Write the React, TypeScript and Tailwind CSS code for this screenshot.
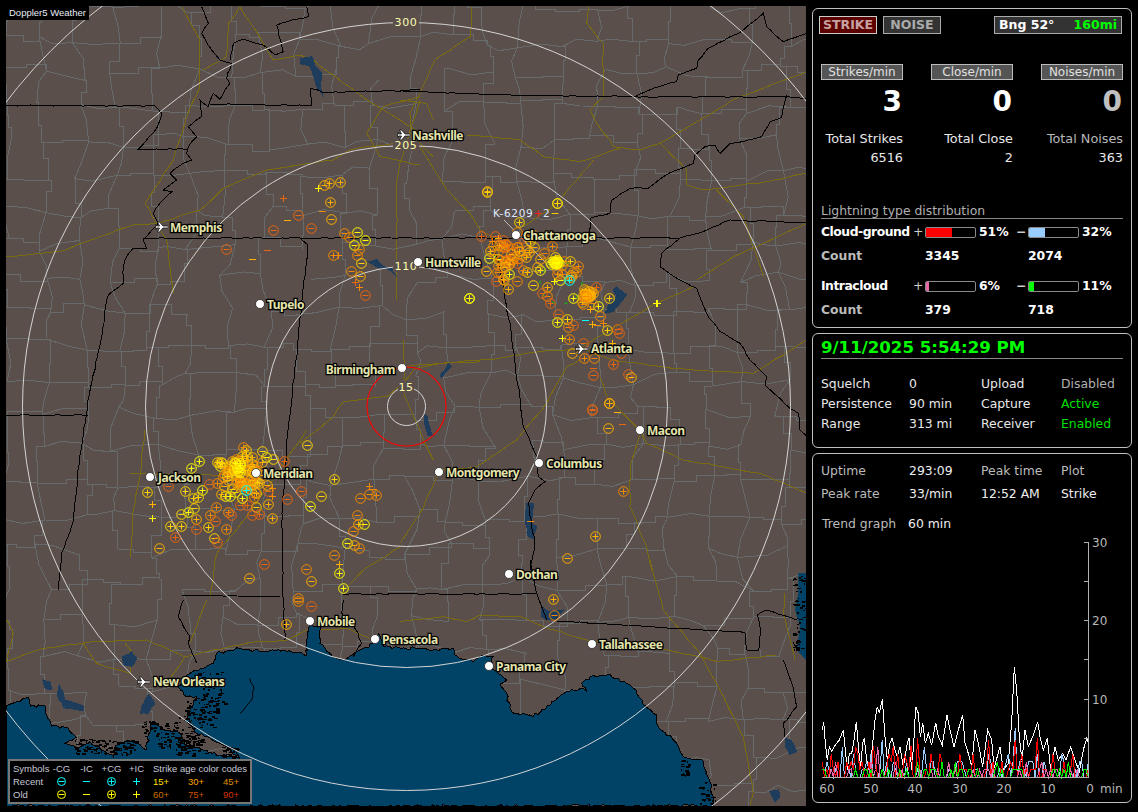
import React from 'react'

type Pt = [number, number]

function seeded(seed: number) {
  let s = seed
  return () => {
    s = (s + 0x6d2b79f5) | 0
    let t = Math.imul(s ^ (s >>> 15), 1 | s)
    t = (t + Math.imul(t ^ (t >>> 7), 61 | t)) ^ t
    return ((t ^ (t >>> 14)) >>> 0) / 4294967296
  }
}

// points below are read off 3x crops, so they carry the crop's origin
const Z = (ox: number, oy: number, pts: number[][]): Pt[] => pts.map((p) => [ox + p[0] / 3, oy + p[1] / 3])
const toD = (pts: Pt[]) => pts.map((p, i) => (i ? 'L' : 'M') + p[0].toFixed(1) + ' ' + p[1].toFixed(1)).join(' ')

function jag(pts: Pt[], amp: number, step: number, seed: number): Pt[] {
  const r = seeded(seed)
  const out: Pt[] = []
  for (let i = 0; i < pts.length - 1; i++) {
    const [x1, y1] = pts[i]
    const [x2, y2] = pts[i + 1]
    const n = Math.max(1, Math.round(Math.hypot(x2 - x1, y2 - y1) / step))
    for (let k = 0; k < n; k++) {
      const f = k / n
      const a = k === 0 ? 0 : amp
      out.push([x1 + (x2 - x1) * f + (r() - 0.5) * a, y1 + (y2 - y1) * f + (r() - 0.5) * a])
    }
  }
  out.push(pts[pts.length - 1])
  return out
}

const gulf: Pt[] = [
  ...Z(0, 600, [[18,318],[50,305],[85,293],[92,318],[135,318],[140,345],[155,378],[205,385],[228,412],[195,430],[235,445],[270,425],[310,452],[340,470],[345,440],[375,425],[415,430],[440,450],[450,375],[470,375],[500,392],[540,400],[560,440],[610,450],[660,465],[720,475],[680,440],[620,410],[590,400],[555,360],[570,330],[590,290],[560,290],[535,260],[570,220],[610,205],[640,190],[650,160],[720,145],[780,155],[850,150],[920,165],[920,130],[930,75],[960,75],[960,130],[1000,172],[1035,178],[1080,150],[1120,130],[1135,100],[1150,140],[1230,148]]),
  ...Z(400, 560, [[30,262],[100,270],[160,265],[165,285],[220,305],[240,290],[280,290],[270,320],[320,360],[300,372],[320,400],[335,455],[400,470],[500,395],[540,385],[560,395],[545,370],[570,350],[630,342],[700,385],[735,437],[770,465],[775,500],[830,550],[850,590],[905,600],[930,665],[942,738]]),
  [6, 806],
]

const lakes: Pt[][] = [
  Z(0, 0, [[900,175],[935,170],[945,200],[965,220],[960,260],[970,290],[950,260],[930,200],[900,190]]),
  Z(0, 0, [[1105,785],[1130,778],[1150,800],[1175,805],[1190,830],[1165,808],[1130,800]]),
  Z(460, 190, [[460,300],[470,290],[480,300],[500,315],[480,340],[460,365],[435,370],[445,345],[470,320]]),
  Z(300, 340, [[420,110],[445,70],[455,80],[435,100],[425,112]]),
  Z(300, 340, [[372,225],[382,228],[390,265],[397,285],[385,285],[375,255]]),
  Z(400, 280, [[380,670],[400,670],[395,730],[410,740],[400,775],[385,770],[375,720]]),
  Z(0, 600, [[368,170],[395,155],[410,175],[395,200],[370,195]]),
  Z(0, 600, [[128,240],[150,245],[155,268],[135,265]]),
  Z(0, 600, [[178,255],[195,300],[250,318],[252,332],[190,322],[172,285]]),
  Z(0, 600, [[425,320],[445,285],[465,310],[445,340],[422,340]]),
  Z(400, 560, [[1155,530],[1180,550],[1190,575],[1170,585],[1155,560]]),
  Z(400, 560, [[1110,695],[1135,690],[1140,710],[1125,725]]),
  Z(400, 560, [[425,140],[445,155],[490,150],[470,180],[440,180],[425,170]]),
]

const atlantic: Pt[] = Z(400, 560, [[1195,40],[1218,40],[1218,300],[1190,270],[1200,200],[1185,150],[1195,100]])

const borders: Pt[][] = [
  Z(0, 0, [[18,316],[465,318],[485,340],[470,385],[415,448],[560,448]]),
  Z(0, 0, [[605,20],[625,70],[605,100],[635,150],[660,180],[695,190],[680,235],[690,250],[675,270],[660,298],[640,280],[625,320],[600,300],[605,350],[565,380],[590,410],[565,440],[560,460],[575,480],[550,490],[510,520],[530,540],[490,570],[515,575],[480,610],[460,640],[475,670],[430,720],[440,745],[400,745],[380,770],[370,800],[370,850],[325,885],[320,900]]),
  [[107,300],[100,345],[88,400],[78,470],[74,520],[62,552],[58,590]],
  [[6,415],[88,415]],
  [[182,595],[280,597]],
  [[343,594],[537,594]],
  Z(0, 600, [[550,0],[535,50],[570,110],[565,130],[590,190]]),
  [[308,245],[302,300],[296,360],[288,430],[282,513],[283,597],[285,640]],
  Z(0, 0, [[430,715],[900,713],[925,735]]),
  [[300,238],[680,238],[707,230],[730,220],[806,223]],
  Z(400, 280, [[305,0],[330,130],[370,440],[410,530],[415,590],[435,605],[405,630],[385,670],[405,790],[390,870]]),
  [[493,238],[502,280]],
  Z(400, 560, [[390,0],[410,100],[425,140],[440,180]]),
  Z(400, 560, [[470,183],[950,212],[1035,218],[1040,270],[1075,272],[1082,215],[1072,165],[1100,150],[1190,180]]),
  Z(0, 600, [[1030,0],[1025,40],[1060,70],[1085,130],[1060,170]]),
  Z(400, 280, [[840,0],[890,25],[920,100],[960,155],[1020,190],[1050,240],[1100,290],[1095,315],[1140,355],[1170,385],[1195,400],[1200,450],[1230,480]]),
  Z(400, 0, [[840,715],[785,760],[780,800],[840,840]]),
  Z(0, 0, [[630,312],[795,315],[935,316],[930,265],[970,278],[1260,270]]),
  Z(400, 0, [[0,272],[300,285],[700,290],[1160,290],[1220,295]]),
  Z(400, 0, [[705,290],[760,265],[830,245],[835,225],[890,205],[895,180],[925,145],[1030,90],[1090,40],[1100,80],[1150,125],[1220,100]]),
  Z(400, 0, [[1160,285],[1145,350],[1140,355],[1110,365],[1085,410],[1045,420],[990,430],[960,460],[945,435],[915,440],[885,465],[880,490],[830,510],[790,530],[745,565],[690,565],[635,600],[630,640],[570,655],[570,715]]),
  Z(0, 0, [[690,180],[700,130],[730,118],[790,135],[825,165],[850,155],[830,75],[860,65],[925,50],[920,20]]),
  Z(400, 560, [[1150,300],[1175,370],[1190,440],[1150,490],[1155,530]]),
]

const roads: Pt[][] = [
  Z(0, 0, [[18,770],[180,755],[300,710],[400,675],[470,670],[600,630],[670,565],[800,510],[1000,480],[1050,450],[1100,440],[1200,430]]),
  Z(0, 0, [[545,20],[600,120],[600,260],[560,350],[520,480],[435,610],[470,670],[500,720],[510,800],[520,880]]),
  Z(0, 0, [[720,20],[685,70],[680,170],[610,210]]),
  Z(0, 0, [[720,20],[790,130],[820,180],[900,165],[940,180],[1100,300],[1200,360],[1260,400]]),
  Z(0, 0, [[1100,400],[1150,320],[1260,290]]),
  Z(0, 0, [[1100,400],[1140,470],[1260,495]]),
  Z(0, 0, [[1190,900],[1190,550],[1200,490],[1260,300]]),
  Z(400, 0, [[215,20],[210,110],[105,180],[60,280],[30,340],[30,400],[100,470]]),
  Z(400, 0, [[565,20],[560,70],[610,130],[610,290],[570,330],[590,370],[630,420],[640,440],[720,450],[780,430],[1020,290],[1220,215]]),
  Z(400, 0, [[200,405],[360,420],[430,470],[540,485],[660,445]]),
  Z(400, 0, [[780,430],[860,510],[860,555],[910,570],[1100,545],[1220,520]]),
  Z(400, 0, [[950,570],[1030,650],[1090,830]]),
  Z(400, 0, [[0,300],[80,310],[100,360]]),
  Z(400, 0, [[60,440],[140,570],[210,640],[240,690],[290,720]]),
  Z(400, 0, [[580,480],[460,620],[370,680]]),
  Z(400, 0, [[890,840],[1000,770],[1220,670]]),
  Z(400, 280, [[0,260],[120,250],[300,235],[420,215],[540,205]]),
  Z(400, 280, [[540,205],[640,240],[820,265],[1060,280],[1220,180]]),
  Z(400, 280, [[540,205],[750,80],[880,20]]),
  Z(400, 280, [[540,240],[500,260],[460,330],[440,370],[350,480],[230,560],[120,570]]),
  Z(400, 280, [[120,570],[60,700],[0,790]]),
  Z(400, 280, [[600,290],[620,350],[720,450],[740,490],[850,540],[1080,580],[1220,640]]),
  Z(400, 280, [[720,460],[690,560],[690,680],[740,800],[755,870]]),
  Z(300, 340, [[0,310],[100,230],[130,185],[260,170],[310,130],[345,85],[430,70],[540,65]]),
  Z(300, 340, [[310,0],[315,170],[345,240],[400,360]]),
  Z(400, 560, [[0,185],[130,170],[200,185],[240,165],[360,170],[430,200],[560,240],[800,270],[900,290],[950,305],[1130,285]]),
  Z(400, 560, [[750,0],[790,150],[900,280],[960,390],[1030,530],[1060,700],[1050,735]]),
  Z(400, 560, [[1155,100],[1150,160],[1185,300]]),
  Z(0, 600, [[18,185],[130,145],[280,125],[440,120],[555,170],[640,150],[770,125],[860,120],[920,90],[1040,85],[1110,115]]),
  Z(0, 600, [[570,130],[620,0]]),
  Z(0, 600, [[20,60],[40,100],[18,185]]),
  Z(0, 600, [[250,130],[290,190],[390,220],[400,160],[375,130]]),
  Z(0, 600, [[510,235],[555,170]]),
  Z(130, 430, [[530,0],[350,260],[260,370],[240,500]]),
  Z(130, 430, [[45,0],[30,140],[10,240],[0,380]]),
  Z(130, 430, [[0,130],[270,135],[300,100]]),
  Z(130, 430, [[810,350],[700,420],[640,480]]),
]

function countyPaths() {
  const r = seeded(42)
  const cols = 23
  const rows = 25
  const grid: Pt[][] = []
  for (let j = 0; j < rows; j++) {
    const row: Pt[] = []
    for (let i = 0; i < cols; i++) {
      row.push([6 + i * 37 + (r() - 0.5) * 18, 6 + j * 34 + (r() - 0.5) * 16])
    }
    grid.push(row)
  }
  const d: string[] = []
  const edge = (a: Pt, b: Pt) => {
    if (r() < 0.14) return
    const mx = (a[0] + b[0]) / 2 + (r() - 0.5) * 10
    const my = (a[1] + b[1]) / 2 + (r() - 0.5) * 10
    const m: Pt = [mx, my]
    d.push(toD(r() < 0.5 ? [a, [mx, a[1]], m, [b[0], my], b] : [a, m, b]))
  }
  for (let j = 0; j < rows; j++) {
    for (let i = 0; i < cols; i++) {
      if (i < cols - 1) edge(grid[j][i], grid[j][i + 1])
      if (j < rows - 1) edge(grid[j][i], grid[j + 1][i])
    }
  }
  return d.join(' ')
}

function marsh() {
  const r = seeded(7)
  const spots: [number, number, number, number][] = [
    [212, 692, 14, 20], [200, 712, 16, 16], [186, 728, 13, 16], [168, 735, 10, 12], [190, 745, 16, 10], [150, 728, 8, 8], [122, 747, 18, 7], [88, 746, 14, 7],
    [799, 590, 6, 14], [801, 615, 5, 16], [797, 640, 5, 10], [707, 792, 8, 12], [684, 768, 4, 8], [230, 752, 8, 6],
  ]
  const d: string[] = []
  for (const [x, y, sx, sy] of spots) {
    for (let i = 0; i < sx * 4; i++) {
      const px = Math.round(x + (r() - 0.5) * 2 * sx)
      const py = Math.round(y + (r() - 0.5) * 2 * sy)
      const w = 1 + Math.floor(r() * 4)
      d.push(`M${px} ${py}h${w}v${r() < 0.5 ? 1 : 2}h-${w}z`)
    }
  }
  return d.join(' ')
}

const C = ['#ffff00', '#ffd400', '#ffb000', '#f58a00', '#e8660f', '#00ffff']
const [Y, A, B, O, D, K] = [0, 1, 2, 3, 4, 5]
type S = [number, number, string, number]

const z5: S[] = [[207,92,'p',Y],[183,115,'p',Y],[270,108,'p',Y],[50,187,'p',A],[115,167,'m',D],[165,184,'p',A],[217,180,'p',Y],[237,162,'m',D],[190,205,'p',A],[205,202,'p',A],[65,223,'+',B],[67,263,'+',Y],[120,287,'p',A],[153,287,'p',A],[153,253,'m',A],[175,247,'p',Y],[193,233,'m',A],[197,268,'p',B],[199,297,'m',D],[235,290,'p',A],[258,230,'p',O],[240,256,'p',O],[256,274,'m',D],[289,297,'p',O],[253,325,'m',A],[260,336,'m',D],[136,320,'p',D],[88,355,'m',B],[425,263,'p',B],[413,223,'p',B],[377,230,'m',A],[387,252,'p',D],[365,256,'m',D],[352,225,'p',D],[330,225,'m',D],[293,245,'p',O],[303,255,'m',D],[285,197,'p',Y],[300,197,'p',Y],[337,203,'p',Y],[377,190,'p',A],[415,183,'m',D],[425,173,'+',O],[425,198,'+',O],[410,165,'m',B],[461,92,'p',D],[430,88,'m',A],[408,80,'m',Y],[397,63,'m',A],[365,82,'p',B],[337,78,'p',A],[530,46,'m',A],[613,146,'p',A],[574,199,'m',A],[512,184,'m',D],[472,208,'m',D],[541,229,'m',Y],[691,205,'m',O],[718,192,'m',O],[737,195,'p',O],[718,167,'+',O],[728,178,'-',O],[680,256,'m',O],[684,283,'p',B],[703,283,'m',Y],[668,304,'m',O],[652,340,'m',Y],[673,345,'m',B],[686,354,'m',O],[613,376,'m',O],[626,401,'+',B],[628,430,'p',Y],[640,475,'p',Y],[529,418,'m',O],[544,454,'m',B],[403,403,'m',D],[358,445,'m',B],[505,505,'m',O]]
const z6: S[] = [[82,5,'p',A],[291,40,'p',A],[178,97,'p',A],[64,138,'p',D],[95,153,'+',O],[113,145,'+',B],[88,205,'m',Y],[115,208,'m',Y],[77,243,'m',B],[110,245,'m',O],[107,272,'m',D],[133,270,'p',O],[148,252,'p',Y],[170,273,'m',O],[145,296,'p',B],[28,325,'p',Y],[202,245,'p',A],[240,240,'p',Y],[220,285,'m',A],[260,292,'p',B],[260,318,'m',O],[245,310,'m',D],[270,340,'p',D],[281,272,'+',Y],[300,270,'m',Y],[338,323,'p',Y],[331,213,'p',A],[408,292,'p',D],[448,325,'p',A],[413,348,'p',Y],[390,358,'+',B],[421,377,'m',O],[375,390,'-',K],[397,403,'+',B],[410,405,'-',O],[428,398,'+',O],[442,421,'p',A],[470,418,'m',D],[476,428,'m',D],[295,372,'m',D],[290,397,'p',Y],[321,388,'p',A],[325,412,'m',O],[340,405,'m',D],[305,445,'+',Y],[328,448,'p',O],[368,460,'m',D],[337,490,'m',B],[373,505,'p',O],[403,505,'m',O],[460,522,'p',D],[398,555,'m',D],[400,535,'-',D],[503,552,'m',D],[512,560,'m',B],[448,640,'p',B],[397,658,'m',D],[590,340,'+',Y],[455,460,'+',B],[483,490,'m',D]]
const z7: S[] = [[955,565,'+',Y],[973,555,'m',B],[988,549,'p',B],[1021,547,'p',B],[850,595,'+',D],[991,607,'p',B],[967,633,'-',O],[895,646,'m',D],[862,661,'-',B],[994,658,'m',B],[820,691,'m',D],[934,685,'m',D],[1033,700,'m',O],[1072,697,'m',Y],[1048,710,'m',O],[1096,721,'m',Y],[1063,736,'m',Y],[1078,748,'m',O],[679,748,'m',D],[802,751,'-',D],[757,778,'-',B],[1000,766,'p',O],[1015,766,'+',O],[1072,766,'m',O],[1084,790,'m',A],[1053,814,'m',O],[1081,829,'m',B],[1065,845,'+',D],[1078,862,'+',O],[1096,886,'m',D]]
const z11: S[] = [[261,574,'p',B],[472,610,'p',Y]]
const z12: S[] = [[207,55,'p',Y],[769,70,'+',Y],[577,390,'m',D],[628,370,'p',B],[650,397,'-',B],[625,445,'m',B],[667,432,'-',D],[670,633,'p',O],[390,723,'-',O],[586,768,'p',B],[502,835,'m',B]]
const z9: S[] = [[858,72,'p',B],[895,3,'m',O],[934,18,'m',D]]
const z10: S[] = [[460,118,'p',B],[463,165,'m',O]]

type Strike = { x: number; y: number; t: string; c: string }

function buildStrikes(): Strike[] {
  const out: Strike[] = []
  const add = (ox: number, oy: number, l: S[]) => l.forEach((s) => out.push({ x: ox + s[0] / 3, y: oy + s[1] / 3, t: s[2], c: C[s[3]] }))
  add(0, 0, z7)
  add(400, 0, z11)
  add(400, 280, z12)
  add(0, 600, z9)
  add(400, 560, z10)
  add(130, 430, z5)
  add(460, 190, z6)
  const r = seeded(11)
  const g = () => (r() + r() + r() - 1.5) / 0.5
  const cluster = (x: number, y: number, sx: number, sy: number, n: number, cols: number[]) => {
    for (let i = 0; i < n; i++) {
      out.push({
        x: x + g() * sx,
        y: y + g() * sy,
        t: r() < 0.5 ? 'p' : 'm',
        c: C[cols[Math.floor(r() * cols.length)]],
      })
    }
  }
  cluster(243, 476, 11, 12, 75, [B, B, O, O, A])
  cluster(236, 468, 5, 5, 10, [A, Y])
  cluster(508, 258, 9, 8, 26, [O, O, D, B])
  cluster(498, 244, 9, 5, 10, [O, B, D])
  cluster(540, 248, 11, 9, 12, [O, B, A])
  cluster(568, 272, 7, 7, 10, [O, B])
  cluster(587, 296, 3, 3, 22, [O, B, B])
  cluster(555, 262, 2, 2, 14, [Y, Y, A])
  return out
}

const strikes = buildStrikes()
const cyanStrikes: Pt[] = [[245.7, 490.3], [569, 280]]

function StrikeMark({ x, y, t, c }: Strike) {
  const px = Math.round(x) + 0.5
  const py = Math.round(y) + 0.5
  return (
    <g stroke={c} fill="none" strokeWidth={1}>
      {(t === 'p' || t === 'm') && <circle cx={px} cy={py} r={4.8} />}
      {t === 'p' && <path d={`M${px - 3} ${py}h6M${px} ${py - 3}v6`} />}
      {t === 'm' && <path d={`M${px - 3} ${py}h6`} />}
      {t === '+' && <path d={`M${px - 3.5} ${py}h7M${px} ${py - 3.5}v7`} />}
      {t === '-' && <path d={`M${px - 3.5} ${py}h7`} />}
    </g>
  )
}

const dots: [number, number][] = [[516, 235], [418, 262], [260, 304], [402, 368], [640, 430], [539, 463], [439, 472], [256, 473], [150, 477], [509, 574], [310, 621], [375, 639], [489, 666], [592, 644]]
const planes: [number, number][] = [[405, 135], [163, 227], [583, 349], [145, 682]]
const labels: [string, number, number, ('start' | 'end')?][] = [
  ['Nashville', 412, 140], ['Memphis', 170, 232], ['Chattanooga', 523, 240], ['Huntsville', 425, 267], ['Tupelo', 267, 309],
  ['Birmingham', 395, 374, 'end'], ['Atlanta', 591, 353], ['Macon', 647, 435], ['Columbus', 546, 468], ['Montgomery', 446, 477],
  ['Meridian', 263, 478], ['Jackson', 158, 482], ['Dothan', 516, 579], ['Mobile', 317, 626], ['Pensacola', 382, 644],
  ['Panama City', 496, 671], ['Tallahassee', 599, 649], ['New Orleans', 153, 686],
]

function RadarMap() {
  const cx = 406.5
  const cy = 406.5
  return (
    <svg viewBox="6 6 800 800" width={800} height={800} className="block">
      <rect x={6} y={6} width={800} height={800} fill="#5a4f4b" />
      <path d={countyPaths()} fill="none" stroke="#676a6b" strokeWidth={1} shapeRendering="crispEdges" />
      {roads.map((r, i) => (
        <path key={i} d={toD(jag(r, 1.2, 9, i + 100))} fill="none" stroke="#7a6a10" strokeWidth={1} shapeRendering="crispEdges" />
      ))}
      <path d={toD(jag(gulf, 2.6, 3, 5)) + ' Z'} fill="#004366" stroke="#000" strokeWidth={1} shapeRendering="crispEdges" />
      <path d={toD(atlantic) + ' Z'} fill="#004366" />
      {lakes.map((l, i) => (
        <path key={i} d={toD(jag(l, 1.5, 4, i + 200)) + ' Z'} fill="#1e3d5c" stroke="#1e3d5c" strokeWidth={1} shapeRendering="crispEdges" />
      ))}
      <path d={marsh()} fill="#000" shapeRendering="crispEdges" />
      <path d={toD(jag(Z(0, 600, [[750,235],[762,265],[755,300],[720,340]]), 2, 4, 9))} fill="none" stroke="#000" />
      {borders.map((b, i) => (
        <path key={i} d={toD(jag(b, 1.2, 6, i + 300))} fill="none" stroke="#000" strokeWidth={1} shapeRendering="crispEdges" />
      ))}
      {[19, 140, 261, 384, 503].map((r) => (
        <circle key={r} cx={cx} cy={cy} r={r} fill="none" stroke="#d4d4d4" strokeWidth={1} />
      ))}
      <circle cx={cx} cy={cy} r={39.5} fill="none" stroke="#ff0000" strokeWidth={1.1} />
      <path d="M504 220 L545 262" stroke="#d8d8d8" strokeWidth={0.8} fill="none" />
      <circle cx={561} cy={283} r={21} fill="none" stroke="#00d000" strokeWidth={1} strokeDasharray="3 10" />
      {strikes.map((s, i) => (
        <StrikeMark key={i} {...s} />
      ))}
      {cyanStrikes.map(([x, y]) => (
        <StrikeMark key={x} x={x} y={y} t="p" c="#00ffff" />
      ))}
      {[['300', 22], ['205', 145], ['110', 266], ['15', 387]].map(([t, y]) => (
        <g key={t}>
          <rect x={406 - (t === '15' ? 8 : 13)} y={(y as number) - 6} width={t === '15' ? 16 : 26} height={12} fill="#5a4f4b" />
          <text x={406} y={(y as number) + 4} textAnchor="middle" fill="#fdfdb0" fontSize={11} letterSpacing={0.6} className="font-['DejaVu_Sans',sans-serif]">
            {t}
          </text>
        </g>
      ))}
      {dots.map(([x, y]) => (
        <circle key={x} cx={x} cy={y} r={4.5} fill="#fff" stroke="#222" strokeWidth={0.8} />
      ))}
      {planes.map(([x, y]) => (
        <path
          key={x}
          transform={`translate(${x} ${y})`}
          d="M-6.5 -1H-3.5L-5.5 -5H-3.5L0 -1H4.5Q6.5 0 4.5 1H0L-3.5 5H-5.5L-3.5 1H-6.5V2.5H-7.5V-2.5H-6.5Z"
          fill="#fff"
          stroke="#111"
          strokeWidth={0.8}
        />
      ))}
      {labels.map(([t, x, y, a]) => (
        <text
          key={t}
          x={x}
          y={y}
          textAnchor={a ?? 'start'}
          fill="#e4e4ac"
          stroke="#000"
          strokeWidth={2.6}
          fontSize={12}
          fontWeight={700}
          letterSpacing={-0.5}
          paintOrder="stroke"
          className="font-['Noto_Sans',sans-serif]"
        >
          {t}
        </text>
      ))}
      <text x={493} y={217} fontSize={10.5} letterSpacing={0.7} fill="#dfe8ff" className="font-['DejaVu_Sans',sans-serif]">
        K-6209<tspan fill="#ff2020">+</tspan>2<tspan fill="#ffd400">−</tspan>
      </text>
    </svg>
  )
}

function LegendMark({ t, c }: { t: string; c: string }) {
  return (
    <svg width={13} height={11} viewBox="0 0 13 11" className="block">
      <g stroke={c} fill="none" strokeWidth={1}>
        {(t === 'p' || t === 'm') && <circle cx={6.5} cy={5.5} r={4} />}
        {t === 'p' && <path d="M3.5 5.5h6M6.5 2.5v6" />}
        {t === 'm' && <path d="M3.5 5.5h6" />}
        {t === '+' && <path d="M3 5.5h7M6.5 2v7" />}
        {t === '-' && <path d="M3 5.5h7" />}
      </g>
    </svg>
  )
}

function Legend() {
  const cell = 'flex justify-center items-center'
  return (
    <div className="absolute left-[2px] bottom-[2px] w-[244px] h-[45px] bg-black border-2 border-[#777] font-['Liberation_Sans',sans-serif] text-[9.5px] leading-[13px] text-[#c8c8d8] grid grid-cols-[36px_25px_25px_25px_25px_35px_35px_1fr] content-center pl-[3px]">
      <span>Symbols</span>
      <span className={cell}>-CG</span>
      <span className={cell}>-IC</span>
      <span className={cell}>+CG</span>
      <span className={cell}>+IC</span>
      <span className="col-span-3 pl-[4px] whitespace-nowrap">Strike age color codes</span>
      <span>Recent</span>
      <span className={cell}><LegendMark t="m" c="#00ffff" /></span>
      <span className={cell}><LegendMark t="-" c="#00ffff" /></span>
      <span className={cell}><LegendMark t="p" c="#00ffff" /></span>
      <span className={cell}><LegendMark t="+" c="#00ffff" /></span>
      <span className="pl-[4px] text-[#ffe000]">15+</span>
      <span className="pl-[4px] text-[#ffa800]">30+</span>
      <span className="pl-[4px] text-[#e09000]">45+</span>
      <span>Old</span>
      <span className={cell}><LegendMark t="m" c="#ffff00" /></span>
      <span className={cell}><LegendMark t="-" c="#ffff00" /></span>
      <span className={cell}><LegendMark t="p" c="#ffff00" /></span>
      <span className={cell}><LegendMark t="+" c="#ffff00" /></span>
      <span className="pl-[4px] text-[#d07000]">60+</span>
      <span className="pl-[4px] text-[#d05000]">75+</span>
      <span className="pl-[4px] text-[#d83000]">90+</span>
    </div>
  )
}

function Bar({ fill }: { fill: string }) {
  return (
    <div className="w-[51px] h-[11px] border border-[#8a8a8a] rounded-[2px] bg-black overflow-hidden">
      <div className={`h-full ${fill}`} />
    </div>
  )
}

function StatColumn({ title, value, total, label, dim }: { title: string; value: string; total: string; label: string; dim?: boolean }) {
  return (
    <div className="flex flex-col items-end w-[82px]">
      <div className="w-full h-[16px] bg-[#555] border border-[#bbb] text-[#e0e0e0] text-[12px] text-center leading-[14px]">{title}</div>
      <div className={`h-[40px] leading-[44px] text-[28px] font-bold pr-[1px] ${dim ? 'text-[#c0c0c0]' : 'text-white'}`}>{value}</div>
      <div className={`mt-[9px] h-[19px] text-[12.8px] leading-[19px] whitespace-nowrap ${dim ? 'text-[#b8b8b8]' : 'text-[#e8e8e8]'}`}>{label}</div>
      <div className="h-[19px] text-[12.8px] leading-[19px] text-[#e8e8e8]">{total}</div>
    </div>
  )
}

function TopPanel() {
  return (
    <div className="h-[320px] border border-[#c0c0c0] rounded-[6px] px-[8px] pt-[7px]">
      <div className="flex items-center -ml-[2px]">
        <div className="w-[58px] h-[18px] bg-[#5c0000] border border-[#ccc] text-[#c8a0a0] font-bold text-[12.5px] leading-[16px] text-center">STRIKE</div>
        <div className="ml-[6px] w-[58px] h-[18px] bg-[#333] border border-[#aaa] text-[#aaa] font-bold text-[12.5px] leading-[16px] text-center">NOISE</div>
        <div className="ml-auto w-[128px] h-[18px] bg-[#333] border border-[#aaa] font-bold text-[12.5px] leading-[16px] px-[4px] flex justify-between mr-[1px]">
          <span className="text-white">Bng 52°</span>
          <span className="text-[#00ff00]">160mi</span>
        </div>
      </div>
      <div className="mt-[30px] grid grid-cols-[82px_82px_82px] gap-x-[28px]">
        <StatColumn title="Strikes/min" value="3" label="Total Strikes" total="6516" />
        <StatColumn title="Close/min" value="0" label="Total Close" total="2" />
        <StatColumn title="Noises/min" value="0" label="Total Noises" total="363" dim />
      </div>
      <div className="mt-[36px] h-[16px] border-b border-[#888] text-[#b0b0b0] leading-[16px]">Lightning type distribution</div>
      <div className="mt-[1px] grid grid-cols-[92px_12px_51px_40px_12px_51px_1fr] auto-rows-[24px] items-center font-bold text-white">
        <span className="tracking-[-0.5px] whitespace-nowrap">Cloud-ground</span>
        <span className="font-normal text-[#ccc]">+</span>
        <Bar fill="w-[26px] bg-[#ff0000]" />
        <span className="pl-[3px]">51%</span>
        <span className="text-[#ccc]">−</span>
        <Bar fill="w-[16px] bg-[#99ccff]" />
        <span className="pl-[3px]">32%</span>

        <span className="text-[#bbb]">Count</span>
        <span />
        <span>3345</span>
        <span />
        <span />
        <span>2074</span>
        <span />

        <span className="mt-[12px] tracking-[-0.5px]">Intracloud</span>
        <span className="mt-[12px] font-normal text-[#ccc]">+</span>
        <div className="mt-[12px]"><Bar fill="w-[3px] bg-[#e868a8]" /></div>
        <span className="mt-[12px] pl-[3px]">6%</span>
        <span className="mt-[12px] text-[#ccc]">−</span>
        <div className="mt-[12px]"><Bar fill="w-[5px] bg-[#00ff00]" /></div>
        <span className="mt-[12px] pl-[3px]">11%</span>

        <span className="mt-[12px] text-[#bbb]">Count</span>
        <span />
        <span className="mt-[12px]">379</span>
        <span />
        <span />
        <span className="mt-[12px]">718</span>
        <span />
      </div>
    </div>
  )
}

function StatusPanel() {
  return (
    <div className="mt-[5px] h-[115px] border border-[#c0c0c0] rounded-[6px] px-[8px] pt-[3px]">
      <div className="h-[22px] border-b border-[#888] text-[#00ff00] font-bold text-[16.6px] leading-[22px] whitespace-nowrap">9/11/2025 5:54:29 PM</div>
      <div className="mt-[15px] grid grid-cols-[88px_72px_80px_1fr] auto-rows-[20px] leading-[20px] text-[#e8e8e8]">
        <span>Squelch</span><span>0</span><span>Upload</span><span className="text-[#b0b0b0]">Disabled</span>
        <span>Persistence</span><span>90 min</span><span>Capture</span><span className="text-[#00e000]">Active</span>
        <span>Range</span><span>313 mi</span><span>Receiver</span><span className="text-[#00e000]">Enabled</span>
      </div>
    </div>
  )
}

const whiteTrace = [[37,840],[41,815],[46,880],[52,930],[58,890],[65,905],[72,890],[80,880],[88,870],[100,840],[106,900],[112,960],[118,910],[125,910],[132,870],[139,815],[146,900],[152,950],[158,880],[163,865],[170,930],[178,950],[186,900],[195,810],[202,770],[208,790],[217,748],[225,860],[232,930],[240,880],[246,865],[255,900],[262,920],[270,890],[280,950],[292,880],[297,865],[305,960],[311,880],[317,770],[325,790],[331,860],[338,818],[346,880],[355,850],[365,885],[377,818],[385,860],[397,885],[411,795],[420,840],[432,890],[445,840],[458,795],[465,880],[475,910],[485,950],[495,840],[505,880],[518,950],[533,840],[545,870],[552,955],[570,890],[580,960],[595,940],[605,815],[613,652],[620,720],[628,860],[636,930],[645,840],[655,890],[668,860],[683,815],[690,860],[700,900],[712,865],[722,960],[735,890],[745,930],[758,910],[768,930],[782,890],[795,930],[808,965],[820,900],[830,865],[835,880]]

function minorTrace(seed: number, max: number, peaks: number[][]): Pt[] {
  const r = seeded(seed)
  const pts: Pt[] = []
  for (let x = 37; x <= 835; x += 6.65) {
    const peak = peaks.find((p) => Math.abs(p[0] - x) < 3.4)
    const level = peak ? peak[1] : 982 - Math.floor(r() * r() * (max + 1)) * 23.5
    pts.push([810 + x / 3, 450 + level / 3])
  }
  return pts
}

function TrendGraph() {
  const white = Z(810, 450, whiteTrace)
  const blue = minorTrace(21, 4, [[218,870],[613,835],[100,890],[340,890]])
  const red = minorTrace(33, 4, [[140,890],[325,865],[533,870],[615,870],[683,865]])
  const pink = minorTrace(44, 2, [[203,890]])
  const green = minorTrace(55, 2, [])
  const ticks = [542, 581, 620, 659, 699, 738]
  return (
    <svg viewBox="813 535 318 266" width={318} height={266} className="block mt-[3px]">
      <g fill="none" strokeWidth={1} shapeRendering="crispEdges">
        <path d={toD(white)} stroke="#fff" />
        <path d={toD(blue)} stroke="#99ccff" />
        <path d={toD(red)} stroke="#ff0000" />
        <path d={toD(pink)} stroke="#e868a8" />
        <path d={toD(green)} stroke="#00ee00" />
        <path d="M822.5 777.5H1088.5V542" stroke="#b0b0b0" />
        {ticks.map((y) => (
          <path key={y} d={`M1083.5 ${y + 0.5}H1088.5`} stroke="#b0b0b0" />
        ))}
      </g>
      <g fill="#b8b8b8" fontSize={12}>
        <text x={1092} y={547}>30</text>
        <text x={1092} y={625}>20</text>
        <text x={1092} y={704}>10</text>
        {[[827, '60'], [871, '50'], [915, '40'], [960, '30'], [1004, '20'], [1048, '10'], [1090, '0']].map(([x, t]) => (
          <text key={t as string} x={x as number} y={793} textAnchor="middle">{t}</text>
        ))}
        <text x={1100} y={793}>min</text>
      </g>
    </svg>
  )
}

function TrendPanel() {
  return (
    <div className="mt-[5px] h-[350px] border border-[#c0c0c0] rounded-[6px] pt-[5px]">
      <div className="px-[8px] grid grid-cols-[88px_72px_80px_1fr] auto-rows-[23px] leading-[23px] text-[#bbb]">
        <span>Uptime</span><span className="text-[#eee]">293:09</span><span>Peak time</span><span>Plot</span>
        <span>Peak rate</span><span className="text-[#eee]">33/min</span><span className="text-[#eee]">12:52 AM</span><span className="text-[#eee]">Strike</span>
      </div>
      <div className="mt-[11px] pl-[9px] h-[16px] leading-[16px] flex text-[#bbb]">
        <span className="w-[86px]">Trend graph</span>
        <span className="text-[#eee]">60 min</span>
      </div>
      <TrendGraph />
    </div>
  )
}

export default function App() {
  return (
    <div className="w-[1138px] h-[812px] bg-black flex overflow-hidden font-['DejaVu_Sans',sans-serif] text-[12.4px]">
      <div className="relative mt-[6px] ml-[6px] w-[800px] h-[800px] shrink-0">
        <RadarMap />
        <div className="absolute left-0 top-0 w-[83px] h-[14px] bg-black font-['Liberation_Sans',sans-serif] text-[9.5px] leading-[14px] pl-[3px] text-[#e8ecf4] whitespace-nowrap">Doppler5 Weather</div>
        <Legend />
      </div>
      <div className="ml-[6px] mt-[8px] w-[320px] shrink-0">
        <TopPanel />
        <StatusPanel />
        <TrendPanel />
      </div>
    </div>
  )
}
